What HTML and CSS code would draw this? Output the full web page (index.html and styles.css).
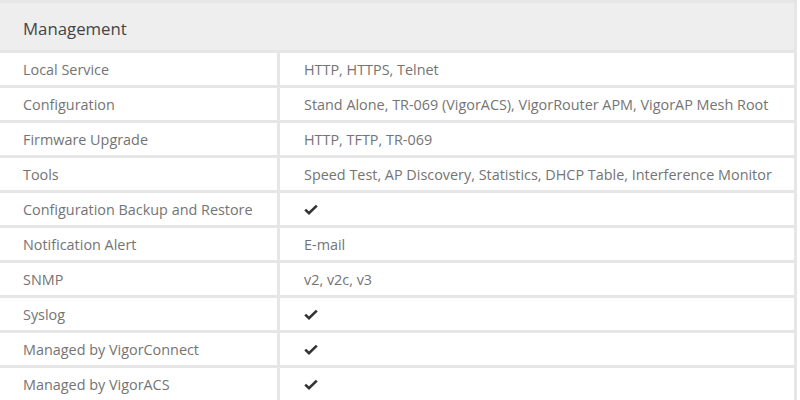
FILE: index.html
```html
<!DOCTYPE html>
<html>
<head>
<meta charset="utf-8">
<link rel="stylesheet" href="styles.css">
</head>
<body>
<div class="spec">
  <div class="head">Management</div>
  <div class="row"><div class="k">Local Service</div><div class="v">HTTP, HTTPS, Telnet</div></div>
  <div class="row"><div class="k">Configuration</div><div class="v">Stand Alone, TR-069 (VigorACS), VigorRouter APM, VigorAP Mesh Root</div></div>
  <div class="row"><div class="k">Firmware Upgrade</div><div class="v">HTTP, TFTP, TR-069</div></div>
  <div class="row"><div class="k">Tools</div><div class="v">Speed Test, AP Discovery, Statistics, DHCP Table, Interference Monitor</div></div>
  <div class="row"><div class="k">Configuration Backup and Restore</div><div class="v"><svg class="chk" viewBox="0 0 14 11"><path d="M1.2 5.6 L5 9.2 L12.8 1.6" fill="none" stroke="#333" stroke-width="2.6"/></svg></div></div>
  <div class="row"><div class="k">Notification Alert</div><div class="v">E-mail</div></div>
  <div class="row"><div class="k">SNMP</div><div class="v">v2, v2c, v3</div></div>
  <div class="row"><div class="k">Syslog</div><div class="v"><svg class="chk" viewBox="0 0 14 11"><path d="M1.2 5.6 L5 9.2 L12.8 1.6" fill="none" stroke="#333" stroke-width="2.6"/></svg></div></div>
  <div class="row"><div class="k">Managed by VigorConnect</div><div class="v"><svg class="chk" viewBox="0 0 14 11"><path d="M1.2 5.6 L5 9.2 L12.8 1.6" fill="none" stroke="#333" stroke-width="2.6"/></svg></div></div>
  <div class="row"><div class="k">Managed by VigorACS</div><div class="v"><svg class="chk" viewBox="0 0 14 11"><path d="M1.2 5.6 L5 9.2 L12.8 1.6" fill="none" stroke="#333" stroke-width="2.6"/></svg></div></div>
</div>
</body>
</html>
```
FILE: styles.css
```css
html, body { margin: 0; padding: 0; background: #fff; }
body { font-family: "Open Sans", "Noto Sans", sans-serif; overflow: hidden; }
.spec {
  width: 797px;
  background: #e6e6e6;
  padding-top: 3px;
  display: flex;
  flex-direction: column;
  gap: 3px;
}
.head {
  background: #eeeeee;
  margin-right: 3px;
  height: 47px;
  display: flex;
  align-items: center;
  padding-left: 23px;
  padding-top: 3px;
  box-sizing: border-box;
  font-size: 16.8px;
  color: #444;
}
.row {
  display: grid;
  grid-template-columns: 277px 1fr;
  column-gap: 3px;
  margin-right: 3px;
  height: 32px;
}
.k, .v {
  background: #fff;
  display: flex;
  align-items: center;
  font-size: 14.4px;
  color: #747474;
}
.k { padding-left: 23px; }
.v { padding-left: 24px; }
.chk { width: 14px; height: 11px; }
```
